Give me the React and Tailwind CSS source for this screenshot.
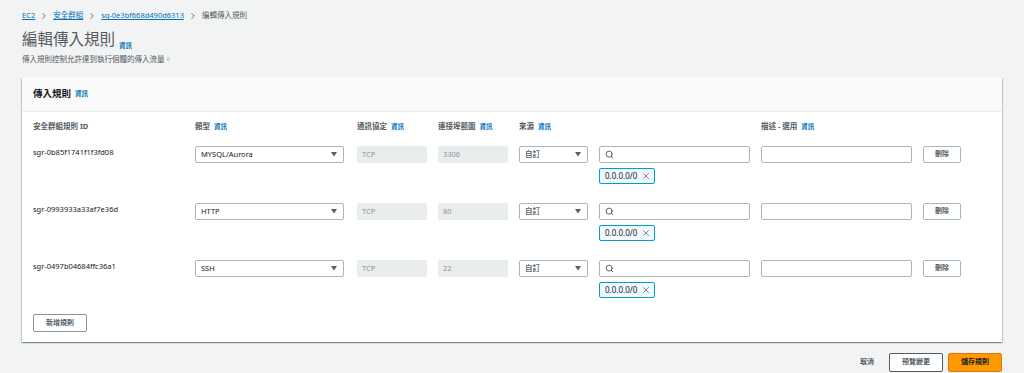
import React from 'react';
import { Search, X, ChevronRight } from 'lucide-react';

const font = { fontFamily: '"Noto Sans", "Noto Sans CJK TC", sans-serif' };

const rules = [
    { id: 'sgr-0b85f1741f1f3fd08', type: 'MYSQL/Aurora', port: '3306' },
    { id: 'sgr-0993933a33af7e36d', type: 'HTTP', port: '80' },
    { id: 'sgr-0497b04684ffc36a1', type: 'SSH', port: '22' },
];

const Info = () => <span className="text-[6.5px] font-bold text-[#0073bb] ml-[4px]">資訊</span>;

const Caret = () => (
    <svg width="6" height="5" viewBox="0 0 6 5" className="shrink-0">
        <polygon points="0,0 6,0 3,4.5" fill="#545b64" />
    </svg>
);

const SelectBox = ({ value, className }) => (
    <div className={`h-[17px] border border-[#aab7b8] rounded-[2px] bg-white flex items-center justify-between pl-[5px] pr-[6px] text-[7.5px] text-[#16191f] ${className}`}>
        <span>{value}</span>
        <Caret />
    </div>
);

const Disabled = ({ value }) => (
    <div className="h-[17px] w-[70px] bg-[#eaeded] rounded-[2px] flex items-center px-[5px] text-[7.5px] text-[#879596]">{value}</div>
);

const App = () => {
    return (
        <div className="w-[1024px] h-[373px] bg-[#f2f3f3] overflow-hidden px-[22px] pt-[9px]" style={font}>
            <div className="h-[14px] flex items-center text-[7.5px] gap-[4px]">
                <span className="text-[#0073bb] underline">EC2</span>
                <ChevronRight size={10} className="text-[#545b64]" strokeWidth={2} />
                <span className="text-[#0073bb] underline">安全群組</span>
                <ChevronRight size={10} className="text-[#545b64]" strokeWidth={2} />
                <span className="text-[#0073bb] underline">sg-0e3bf668d490d6313</span>
                <ChevronRight size={10} className="text-[#545b64]" strokeWidth={2} />
                <span className="text-[#545b64]">編輯傳入規則</span>
            </div>

            <div className="mt-[6px] h-[22px] flex items-center">
                <span className="text-[15.5px] text-[#545b64] font-normal leading-none">編輯傳入規則</span>
                <span className="mt-[4px]"><Info /></span>
            </div>
            <div className="mt-[3px] h-[12px] flex items-center text-[7.5px] text-[#545b64]">傳入規則控制允許達到執行個體的傳入流量。</div>

            <div className="mt-[11px] bg-white shadow-[0_1px_1px_0_rgba(0,28,36,0.3),1px_1px_1px_0_rgba(0,28,36,0.15),-1px_1px_1px_0_rgba(0,28,36,0.15)]">
                <div className="h-[35px] bg-[#fafafa] border-b border-[#eaeded] flex items-center px-[11px]">
                    <span className="text-[9.5px] font-bold text-[#16191f]">傳入規則</span>
                    <Info />
                </div>

                <div className="px-[11px] pt-[8px] pb-[10px]">
                    <div className="grid grid-cols-[162px_162px_81px_81px_80px_162px_162px_38px] h-[14px] items-center text-[7.5px] font-bold text-[#545b64]">
                        <div>安全群組規則 ID</div>
                        <div className="flex items-center">類型<Info /></div>
                        <div className="flex items-center">通訊協定<Info /></div>
                        <div className="flex items-center">連接埠範圍<Info /></div>
                        <div className="flex items-center">來源<Info /></div>
                        <div></div>
                        <div className="flex items-center">描述 - 選用<Info /></div>
                        <div></div>
                    </div>

                    <div className="mt-[12px] flex flex-col gap-[19px]">
                        {rules.map((r) => (
                            <div key={r.id} className="grid grid-cols-[162px_162px_81px_81px_80px_162px_162px_38px] items-start">
                                <div className="text-[7.5px] text-[#16191f] h-[13px] flex items-center">{r.id}</div>
                                <div><SelectBox value={r.type} className="w-[149px]" /></div>
                                <div><Disabled value="TCP" /></div>
                                <div><Disabled value={r.port} /></div>
                                <div><SelectBox value="自訂" className="w-[69px]" /></div>
                                <div>
                                    <div className="h-[17px] w-[151px] border border-[#aab7b8] rounded-[2px] bg-white flex items-center pl-[5px]">
                                        <Search size={9} strokeWidth={2.5} className="text-[#545b64]" />
                                    </div>
                                    <div className="mt-[5px] h-[16px] w-[56px] border border-[#00a1c9] bg-[#f1faff] rounded-[2px] flex items-center justify-between pl-[5px] pr-[3px] text-[8px] text-[#16191f]">
                                        <span>0.0.0.0/0</span>
                                        <X size={10} strokeWidth={1.75} className="text-[#545b64]" />
                                    </div>
                                </div>
                                <div>
                                    <div className="h-[17px] w-[151px] border border-[#aab7b8] rounded-[2px] bg-white"></div>
                                </div>
                                <div>
                                    <div className="h-[17px] w-[38px] border border-[#aab7b8] rounded-[2px] bg-white flex items-center justify-center text-[7px] font-bold text-[#545b64]">刪除</div>
                                </div>
                            </div>
                        ))}
                    </div>

                    <div className="mt-[16px] h-[18px] w-[54px] border border-[#879596] rounded-[2px] bg-white flex items-center justify-center text-[7px] font-bold text-[#545b64]">新增規則</div>
                </div>
            </div>

            <div className="mt-[11px] flex items-center justify-end">
                <span className="text-[7px] font-bold text-[#545b64] mr-[15px]">取消</span>
                <div className="h-[19px] w-[54px] border border-[#545b64] rounded-[2px] bg-white flex items-center justify-center text-[7px] font-bold text-[#545b64]">預覽變更</div>
                <div className="ml-[5px] h-[19px] w-[54px] bg-[#ff9900] border border-[#ec7211] rounded-[2px] flex items-center justify-center text-[7px] font-bold text-[#16191f]">儲存規則</div>
            </div>
        </div>
    );
};

export default App;
